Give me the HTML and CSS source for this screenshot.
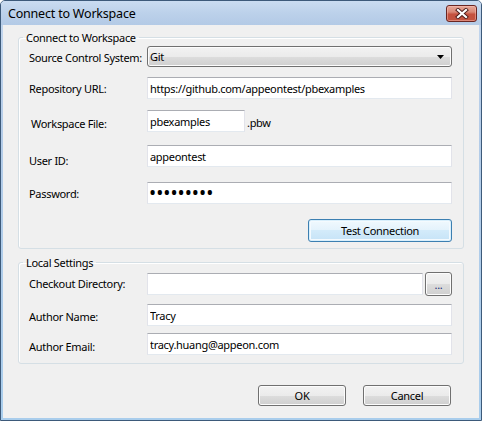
FILE: index.html
```html
<!DOCTYPE html>
<html lang="en">

<head>
    <meta charset="UTF-8">
    <meta name="viewport" content="width=device-width, initial-scale=1.0">
    <title>Connect to Workspace</title>
    <link rel="stylesheet" href="styles.css">
</head>

<body>
    <div class="window">
        <div class="titlebar">
            <span class="title">Connect to Workspace</span>
            <button class="close" type="button" aria-label="Close">
                <svg width="16" height="11" viewBox="0 0 16 11">
                    <path d="M4 2 L12 9 M12 2 L4 9" stroke="#4a1a18" stroke-width="4" stroke-linecap="square" fill="none"/>
                    <path d="M4 2 L12 9 M12 2 L4 9" stroke="#fff" stroke-width="2.2" stroke-linecap="square" fill="none"/>
                </svg>
            </button>
        </div>

        <div class="client">
            <fieldset class="group group-connect">
                <legend>Connect to Workspace</legend>

                <div class="row row-scs">
                    <label class="lbl">Source Control System:</label>
                    <div class="combo">
                        <span>Git</span>
                        <svg class="arrow" width="7" height="4" viewBox="0 0 7 4"><polygon points="0,0 7,0 3.5,4" fill="#000"/></svg>
                    </div>
                </div>

                <div class="row row-url">
                    <label class="lbl">Repository URL:</label>
                    <input class="textbox" type="text" value="https://github.com/appeontest/pbexamples">
                </div>

                <div class="row row-ws">
                    <label class="lbl lbl-ws">Workspace File:</label>
                    <input class="textbox textbox-short" type="text" value="pbexamples">
                    <span class="suffix">.pbw</span>
                </div>

                <div class="row row-user">
                    <label class="lbl lbl-user">User ID:</label>
                    <input class="textbox" type="text" value="appeontest">
                </div>

                <div class="row row-pass">
                    <label class="lbl">Password:</label>
                    <input class="textbox password" type="password" value="appeon123">
                </div>

                <div class="row row-test">
                    <button class="btn btn-default btn-test" type="button">Test Connection</button>
                </div>
            </fieldset>

            <fieldset class="group group-local">
                <legend>Local Settings</legend>

                <div class="row row-dir">
                    <label class="lbl">Checkout Directory:</label>
                    <input class="textbox textbox-dir" type="text" value="">
                    <button class="btn btn-browse" type="button">...</button>
                </div>

                <div class="row row-name">
                    <label class="lbl lbl-name">Author Name:</label>
                    <input class="textbox" type="text" value="Tracy">
                </div>

                <div class="row row-email">
                    <label class="lbl lbl-email">Author Email:</label>
                    <input class="textbox" type="text" value="tracy.huang@appeon.com">
                </div>
            </fieldset>

            <div class="actions">
                <button class="btn btn-action" type="button">OK</button>
                <button class="btn btn-action" type="button">Cancel</button>
            </div>
        </div>
    </div>
</body>

</html>
```

FILE: styles.css
```css
* {
    margin: 0;
    padding: 0;
    box-sizing: border-box;
}

body {
    font-family: "Noto Sans", "Open Sans", sans-serif;
    font-size: 11px;
    letter-spacing: -0.3px;
    color: #000;
    background: #fff;
}

.window {
    width: 482px;
    height: 421px;
    border: 1px solid #3d5a7a;
    border-radius: 5px 5px 0 0;
    background: linear-gradient(to bottom, #c4d7ee 0%, #b4cce8 30%, #a9cdec 100%);
    display: flex;
    flex-direction: column;
}

/* title bar */
.titlebar {
    height: 24px;
    display: flex;
    align-items: center;
    justify-content: space-between;
    padding: 0 4px 0 7px;
    background: linear-gradient(to bottom, #cadcf1 0%, #bcd1ea 50%, #b3cae6 100%);
    border-radius: 4px 4px 0 0;
}

.title {
    font-size: 12.5px;
    letter-spacing: -0.2px;
    color: #000;
}

.close {
    width: 31px;
    height: 17px;
    border: 1px solid #6a2622;
    border-radius: 3px;
    background: linear-gradient(to bottom, #e6a797 0%, #d98876 40%, #c5513e 55%, #c25440 100%);
    box-shadow: inset 0 0 0 1px rgba(255, 200, 190, 0.45);
    display: flex;
    align-items: center;
    justify-content: center;
}

/* client area */
.client {
    flex: 1;
    margin: 0 2px 2px;
    background: #f0f0f0;
    padding: 5px 15px 0;
    display: flex;
    flex-direction: column;
}

.group {
    border: 1px solid #d5dfe5;
    border-radius: 3px;
    box-shadow: inset 1px 1px 0 #fff;
    padding: 0 11px 0 10px;
}

.group legend {
    margin-left: -6px;
    padding: 0 3px;
    line-height: 15px;
    font-size: 11px;
}

.group-connect {
    padding-top: 1px;
    padding-bottom: 6px;
}

.group-local {
    margin-top: 6px;
    padding-top: 2px;
    padding-bottom: 8px;
}

.row {
    display: flex;
    align-items: flex-start;
}

.lbl {
    width: 118px;
    flex: none;
    line-height: 15px;
    margin-top: 4px;
}

.lbl-ws {
    margin-top: 6px;
    padding-left: 2px;
}

.lbl-user {
    margin-top: 8px;
}

.lbl-name {
    margin-top: 5px;
}

.lbl-email {
    margin-top: 6px;
}

.row-url { margin-top: 10px; }
.row-ws { margin-top: 11px; }
.row-user { margin-top: 13px; }
.row-pass { margin-top: 14px; }
.row-test { margin-top: 15px; justify-content: flex-end; }
.row-name { margin-top: 8px; }
.row-email { margin-top: 7px; }

/* controls */
.textbox {
    flex: 1;
    height: 22px;
    border: 1px solid #e2e3ea;
    border-top-color: #abadb3;
    border-bottom-color: #e3e9ef;
    background: #fff;
    padding: 0 2px;
    font: inherit;
    letter-spacing: inherit;
    color: #000;
    outline: none;
}

.textbox-short {
    flex: none;
    width: 98px;
}

.suffix {
    line-height: 15px;
    margin: 5px 0 0 2px;
}

.textbox-dir {
    margin-top: 1px;
}

.password {
    font-size: 19px;
    letter-spacing: 0;
    padding-left: 1px;
}

.combo {
    flex: 1;
    height: 21px;
    border: 1px solid #707070;
    border-radius: 3px;
    background: linear-gradient(to bottom, #f2f2f2 0%, #ebebeb 50%, #dddddd 50%, #cfcfcf 100%);
    box-shadow: inset 0 0 0 1px #fcfcfc;
    display: flex;
    align-items: center;
    justify-content: space-between;
    padding: 0 7px 0 2px;
}

.arrow {
    display: block;
}

.btn {
    font: inherit;
    letter-spacing: inherit;
    color: #000;
    border: 1px solid #707070;
    border-radius: 3px;
    background: linear-gradient(to bottom, #f2f2f2 0%, #ebebeb 50%, #dddddd 50%, #cfcfcf 100%);
    box-shadow: inset 0 0 0 1px #fcfcfc;
}

.btn-default {
    border-color: #3c7fb1;
    background: linear-gradient(to bottom, #f1f9fe 0%, #e3f2fc 50%, #d3ebfa 50%, #c6e3f7 100%);
    box-shadow: inset 0 0 0 1px #d8effc, inset 0 0 0 2px #f4fafe;
}

.btn-test {
    width: 144px;
    height: 23px;
}

.btn-browse {
    width: 27px;
    height: 24px;
    margin-left: 2px;
    color: #1c2c78;
    line-height: 10px;
    padding-top: 2px;
}

.actions {
    display: flex;
    justify-content: flex-end;
    gap: 17px;
    margin-top: 21px;
    padding-right: 13px;
}

.btn-action {
    width: 88px;
    height: 21px;
}
```
